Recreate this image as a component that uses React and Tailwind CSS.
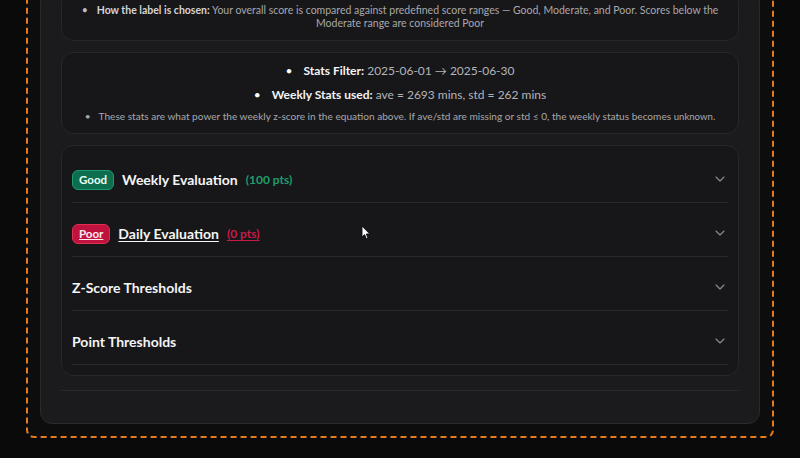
import React from "react";
import { ChevronDown } from "lucide-react";

const font = { fontFamily: 'Lato, "Noto Sans", sans-serif' };

function Row({ badge, title, pts, tone, underline }) {
  const badgeCls =
    tone === "good"
      ? "bg-[#0c6e4f] border-[#1b9a6c] text-[#e9fff6]"
      : "bg-[#c0123e] border-[#e0304f] text-[#ffe9ee]";
  const ptsCls = tone === "good" ? "text-[#1f9d6c]" : "text-[#c9194a]";
  return (
    <div className="border-b border-[#2a2a2d]">
      <div className="flex items-center justify-between pt-[19px] pb-[11px]">
        <div className="flex items-center gap-2 leading-[23px]">
          {badge && (
            <span
              className={`inline-flex h-[20px] items-center rounded-md border px-[6px] text-[11.5px] font-bold leading-none ${badgeCls} ${underline ? "underline" : ""}`}
            >
              {badge}
            </span>
          )}
          <span className={`text-[14px] font-bold text-[#f4f4f5] ${underline ? "underline underline-offset-2" : ""}`}>
            {title}
          </span>
          {pts && (
            <span className={`text-[12px] font-bold ${ptsCls} ${underline ? "underline underline-offset-2" : ""}`}>
              {pts}
            </span>
          )}
        </div>
        <ChevronDown size={16} strokeWidth={1.6} className="-translate-y-px text-[#8d8d93]" />
      </div>
    </div>
  );
}

export default function App() {
  return (
    <div style={font} className="relative flex h-[458px] w-[800px] flex-col justify-end overflow-hidden bg-[#0a0a0b] px-[26px] pb-[20px]">
      <div className="rounded-lg border-2 border-dashed border-[#e57b1c] bg-[#0d0d0e] p-3">
        <div className="rounded-xl border border-[#2a2a2d] bg-[#1b1b1d] px-5 pb-[32px]">
          <div className="flex flex-col gap-[11px]">
            {/* Card 1 (cut off at top) */}
            <div className="flex flex-col items-center rounded-xl border border-[#27272a] bg-[#171719] px-4 pb-[10px] pt-3 text-[10.5px] text-[#a7a7ad]">
              <p className="h-[13px] whitespace-nowrap leading-[13px]">
                <span className="mr-[9px] text-[#bdbdc2]">•</span>
                <span className="font-bold text-[#d4d4d8]">How the label is chosen:</span> Your overall score is
                compared against predefined score ranges — Good, Moderate, and Poor. Scores below the
              </p>
              <p className="h-[13px] whitespace-nowrap leading-[13px]">Moderate range are considered Poor</p>
            </div>

            {/* Card 2 */}
            <div className="rounded-xl border border-[#27272a] bg-[#171719] px-4 pb-[10px] pt-[8px]">
              <div className="flex flex-col text-center">
                <p className="h-[20px] text-[12px] leading-[20px] text-[#b4b4ba]">
                  <span className="mr-[11px] text-white">•</span>
                  <span className="font-bold text-[#f4f4f5]">Stats Filter:</span> 2025-06-01 → 2025-06-30
                </p>
                <p className="mt-[4px] h-[20px] text-[12px] leading-[20px] text-[#b4b4ba]">
                  <span className="mr-[11px] text-white">•</span>
                  <span className="font-bold text-[#f4f4f5]">Weekly Stats used:</span> ave = 2693 mins, std = 262 mins
                </p>
                <p className="mt-[4px] h-[14px] whitespace-nowrap text-[10.1px] leading-[14px] text-[#a7a7ad]">
                  <span className="mr-[8px]">•</span>
                  These stats are what power the weekly z-score in the equation above. If ave/std are missing or std ≤ 0,
                  the weekly status becomes <span className="text-[9.6px]">unknown</span>.
                </p>
              </div>
            </div>

            {/* Accordion card */}
            <div className="rounded-xl border border-[#27272a] bg-[#171719] px-[10px] pb-[10px] pt-[3px]">
              <Row badge="Good" title="Weekly Evaluation" pts="(100 pts)" tone="good" />
              <Row badge="Poor" title="Daily Evaluation" pts="(0 pts)" tone="poor" underline />
              <Row title="Z-Score Thresholds" />
              <Row title="Point Thresholds" />
            </div>
          </div>
          <div className="mt-[14px] h-px bg-[#28282b]" />
        </div>
      </div>

      {/* mouse cursor */}
      <svg className="absolute left-[361px] top-[225px]" width="10" height="15" viewBox="0 0 10 15">
        <path d="M1 1 L1 12 L3.6 9.6 L5.4 13.8 L7 13.1 L5.3 9 L8.8 9 Z" fill="#ffffff" stroke="#111" strokeWidth="0.9" strokeLinejoin="round" />
      </svg>
    </div>
  );
}
